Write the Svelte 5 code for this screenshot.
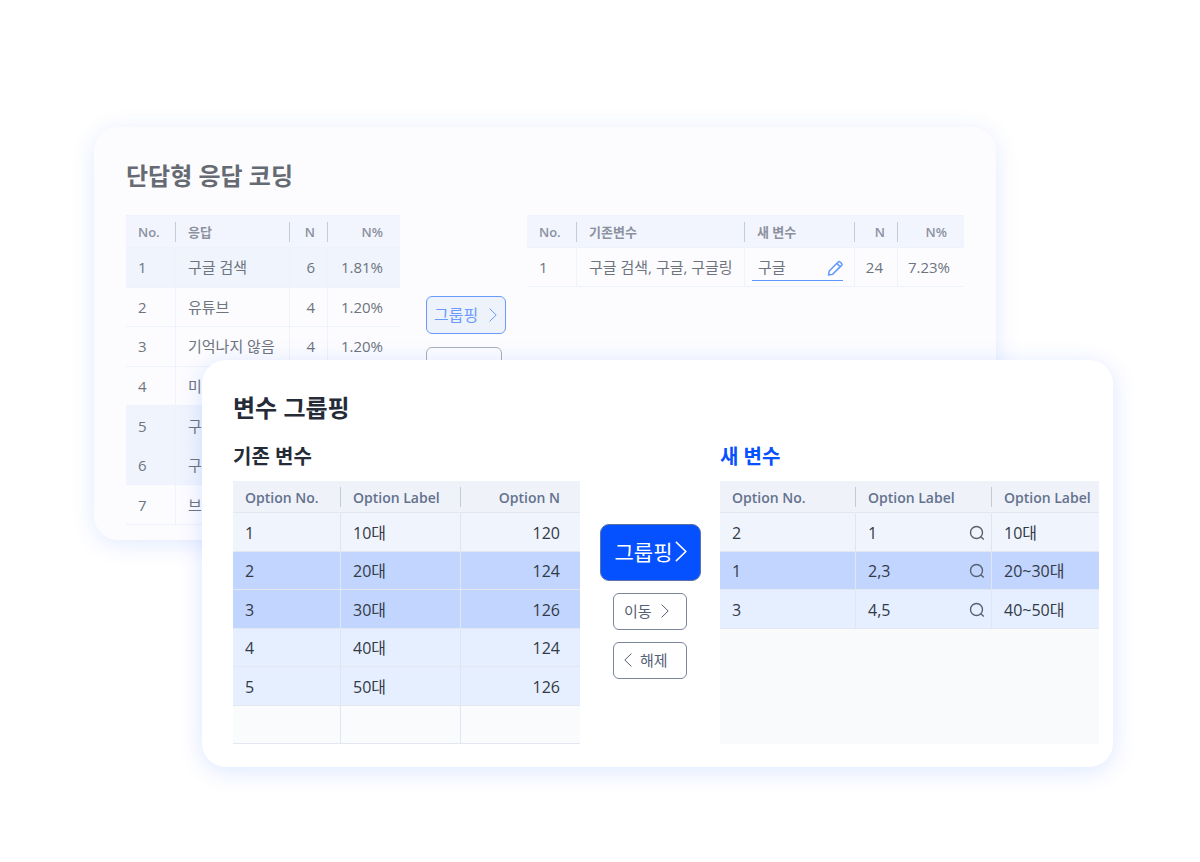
<script lang="ts">
    //Types
    type Answer = { no: number, label: string, n?: number, percent?: string, picked?: boolean };
    type OldOption = { no: number | string, label: string, n: number | string, tone: string };
    type NewOption = { no: number, members: string, label: string, tone: string };

    //Data
    const answers: Answer[] = [
        { no: 1, label: "구글 검색", n: 6, percent: "1.81%", picked: true },
        { no: 2, label: "유튜브", n: 4, percent: "1.20%" },
        { no: 3, label: "기억나지 않음", n: 4, percent: "1.20%" },
        { no: 4, label: "미" },
        { no: 5, label: "구", picked: true },
        { no: 6, label: "구", picked: true },
        { no: 7, label: "브" },
    ];
    const oldOptions: OldOption[] = [
        { no: 1, label: "10대", n: 120, tone: "pale" },
        { no: 2, label: "20대", n: 124, tone: "picked" },
        { no: 3, label: "30대", n: 126, tone: "picked" },
        { no: 4, label: "40대", n: 124, tone: "soft" },
        { no: 5, label: "50대", n: 126, tone: "soft" },
        { no: "", label: "", n: "", tone: "blank" },
    ];
    const newOptions: NewOption[] = [
        { no: 2, members: "1", label: "10대", tone: "pale" },
        { no: 1, members: "2,3", label: "20~30대", tone: "picked" },
        { no: 3, members: "4,5", label: "40~50대", tone: "soft" },
    ];

    let newName = $state("구글");
</script>

{#snippet chevron(left: boolean)}
    <svg class="chevron" viewBox="0 0 8 14" aria-hidden="true">
        <path d={left ? "M7.4.6.8 7l6.6 6.4" : "M.6.6 7.2 7 .6 13.4"} />
    </svg>
{/snippet}

<main>
    <section class="card coding">
        <h1>단답형 응답 코딩</h1>
        <div class="columns">
            <table class="answers">
                <colgroup><col class="a-no" /><col class="a-label" /><col class="a-n" /><col /></colgroup>
                <thead>
                    <tr><th>No.</th><th>응답</th><th class="num">N</th><th class="num wide">N%</th></tr>
                </thead>
                <tbody>
                    {#each answers as row (row.no)}
                        <tr class:picked={row.picked}>
                            <td>{row.no}</td>
                            <td>{row.label}</td>
                            <td class="num">{row.n ?? ""}</td>
                            <td class="num wide">{row.percent ?? ""}</td>
                        </tr>
                    {/each}
                </tbody>
            </table>

            <div class="actions">
                <button class="group">그룹핑 {@render chevron(false)}</button>
                <button class="move">이동 {@render chevron(false)}</button>
            </div>

            <table class="merged">
                <colgroup><col class="m-no" /><col class="m-old" /><col class="m-new" /><col class="m-n" /><col /></colgroup>
                <thead>
                    <tr><th>No.</th><th>기존변수</th><th>새 변수</th><th class="num">N</th><th class="num wide">N%</th></tr>
                </thead>
                <tbody>
                    <tr>
                        <td>1</td>
                        <td>구글 검색, 구글, 구글링</td>
                        <td class="edit">
                            <label>
                                <input type="text" aria-label="새 변수" bind:value={newName} />
                                <svg viewBox="0 0 16 16" aria-hidden="true">
                                    <path d="M1.6 14.8l.6-3.8 9-9a1.3 1.3 0 0 1 1.9 0l1.5 1.5a1.3 1.3 0 0 1 0 1.9l-9 9zM9.8 3.4l3.4 3.4" />
                                </svg>
                            </label>
                        </td>
                        <td class="num">24</td>
                        <td class="num wide">7.23%</td>
                    </tr>
                </tbody>
            </table>
        </div>
    </section>

    <section class="card grouping">
        <h1>변수 그룹핑</h1>
        <div class="columns">
            <div class="panel">
                <h2>기존 변수</h2>
                <table class="old">
                    <colgroup><col class="o-no" /><col class="o-label" /><col /></colgroup>
                    <thead>
                        <tr><th>Option No.</th><th>Option Label</th><th class="num">Option N</th></tr>
                    </thead>
                    <tbody>
                        {#each oldOptions as row (row.no)}
                            <tr class={row.tone}>
                                <td>{row.no}</td>
                                <td>{row.label}</td>
                                <td class="num">{row.n}</td>
                            </tr>
                        {/each}
                    </tbody>
                </table>
            </div>

            <div class="actions">
                <button class="group">그룹핑{@render chevron(false)}</button>
                <button>이동 {@render chevron(false)}</button>
                <button class="back">{@render chevron(true)} 해제</button>
            </div>

            <div class="panel fresh">
                <h2>새 변수</h2>
                <div class="well">
                    <table class="new">
                        <colgroup><col class="n-no" /><col class="n-label" /><col /></colgroup>
                        <thead>
                            <tr><th>Option No.</th><th>Option Label</th><th>Option Label</th></tr>
                        </thead>
                        <tbody>
                            {#each newOptions as row (row.no)}
                                <tr class={row.tone}>
                                    <td>{row.no}</td>
                                    <td>
                                        <div class="search">
                                            {row.members}
                                            <button aria-label="검색">
                                                <svg viewBox="0 0 16 16" aria-hidden="true">
                                                    <circle cx="7.5" cy="7.5" r="6" />
                                                    <path d="M11.8 11.8l3 2.7" />
                                                </svg>
                                            </button>
                                        </div>
                                    </td>
                                    <td>{row.label}</td>
                                </tr>
                            {/each}
                        </tbody>
                    </table>
                </div>
            </div>
        </div>
    </section>
</main>

<style>
    :global(body) {
        background: #fff;
    }

    main {
        padding: 127px 87px 95px 94px;
        font-family: "Open Sans", "Noto Sans CJK KR", sans-serif;
        font-size: 16px;
        line-height: 24px;
        color: #333a45;
    }

    .card {
        box-sizing: border-box;
        border-radius: 24px;
    }

    .coding {
        margin-right: 117px;
        padding: 31px 32px 15px;
        background: #fcfcff;
        box-shadow: 0 4px 24px rgba(0, 80, 255, 0.12);
        font-size: 15px;
        color: #6e747e;
    }

    /* lies over the lower part of the coding card */
    .grouping {
        position: relative;
        margin-top: -180px;
        margin-left: 108px;
        padding: 30px 14px 23px 31px;
        background: #fff;
        box-shadow: 0 4px 24px rgba(0, 80, 255, 0.14);
    }

    h1 {
        margin: 0;
        font-size: 24px;
        line-height: 36px;
        font-weight: 700;
        color: #252c37;
    }

    .coding h1 {
        margin-bottom: 21px;
        color: #666b73;
    }

    h2 {
        margin: 16px 0 9px;
        font-size: 20px;
        line-height: 30px;
        font-weight: 700;
        color: #252c37;
    }

    .fresh h2 {
        color: #0551ff;
    }

    .columns {
        display: grid;
    }

    .coding .columns {
        grid-template-columns: 274fr 127px 437fr;
        align-items: start;
    }

    .grouping .columns {
        grid-template-columns: 347fr 140px 379fr;
    }

    /* Tables */
    table {
        width: 100%;
        table-layout: fixed;
        border-collapse: separate;
        border-spacing: 0;
    }

    th,
    td {
        box-sizing: border-box;
        padding: 2px 0 0 12px;
        text-align: left;
        white-space: nowrap;
        border-bottom: 1px solid #e2e7f0;
    }

    td + td,
    th + th {
        border-left: 1px solid transparent;
    }

    td + td {
        border-left-color: #dfe6f1;
    }

    th {
        height: 32px;
        font-size: 14px;
        line-height: 20px;
        font-weight: 600;
        color: #64718e;
        background: #eff3f9;
    }

    /* short divider between the header cells */
    th + th {
        background: linear-gradient(#c3cbd9, #c3cbd9) left center / 1px 20px no-repeat border-box, #eff3f9;
    }

    .num {
        padding: 2px 20px 0 0;
        text-align: right;
    }

    .coding th {
        height: 33px;
        font-size: 13px;
        color: #8c919f;
        background-color: #f2f5fd;
        border-top: 1px solid #edf2fc;
    }

    .coding th,
    .coding td {
        padding-top: 0;
        border-bottom-color: #edf2fc;
    }

    .coding td + td {
        border-left-color: #edf2fc;
    }

    .coding .num {
        padding-right: 12px;
    }

    .coding .wide {
        padding-right: 17px;
    }

    .coding .merged td.num {
        padding-right: 14px;
    }

    .coding .picked td {
        background: #f0f4fd;
    }

    .answers {
        height: 310px;
    }

    .merged tbody td {
        height: 39px;
    }

    .a-no { width: 49px; }
    .a-label { width: 114px; }
    .a-n { width: 38px; }
    .m-no { width: 49px; }
    .m-old { width: 168px; }
    .m-new { width: 110px; }
    .m-n { width: 43px; }
    .o-no { width: 107px; }
    .o-label { width: 120px; }
    .n-no { width: 135px; }
    .n-label { width: 136px; }

    .coding .edit {
        padding: 2px 11px 0 7px;
    }

    .edit label {
        display: flex;
        align-items: center;
        border-bottom: 1px solid #5f95ff;
    }

    .edit input {
        flex: 1;
        min-width: 0;
        padding: 0 0 2px 6px;
        border: 0;
        outline: 0;
        background: none;
        font: inherit;
        line-height: 22px;
        color: inherit;
    }

    .edit svg {
        width: 16px;
        height: 16px;
        fill: none;
        stroke: #5f95ff;
        stroke-width: 1.5;
    }

    .old tbody td {
        height: 38px;
    }

    .old {
        height: 263px;
    }

    .new tbody {
        height: 116px;
    }

    .pale td { background: #f0f4fc; }
    .grouping .picked td { background: #c1d5ff; }
    .soft td { background: #e6efff; }
    .blank td { background: #f9fbfd; }

    .panel {
        display: flex;
        flex-direction: column;
    }

    .well {
        flex: 1;
        background: #f9fafc;
    }

    .search {
        display: flex;
        align-items: center;
        justify-content: space-between;
        padding-right: 6px;
    }

    .search button {
        display: flex;
        padding: 0;
        border: 0;
        background: none;
    }

    .search svg {
        width: 16px;
        height: 16px;
        fill: none;
        stroke: #56606f;
        stroke-width: 1.4;
    }

    /* Buttons */
    .actions {
        display: flex;
        flex-direction: column;
        align-items: center;
        gap: 12px;
        padding-top: 98px;
    }

    .actions button {
        box-sizing: border-box;
        display: flex;
        align-items: center;
        gap: 9px;
        width: 74px;
        height: 37px;
        padding: 0 10px 2px;
        border: 1px solid #7a859c;
        border-radius: 6px;
        background: #fff;
        font: inherit;
        font-size: 15px;
        color: #566074;
        white-space: nowrap;
    }

    .actions .back {
        gap: 8px;
    }

    .chevron {
        flex: none;
        width: 8px;
        height: 14px;
        fill: none;
        stroke: currentColor;
        stroke-width: 1;
    }

    .grouping .group {
        gap: 3px;
        width: 101px;
        height: 57px;
        padding: 0 14px 2px;
        border-color: #5b73ad;
        border-radius: 9px;
        background: #0551ff;
        font-size: 21px;
        color: #fff;
    }

    .grouping .group .chevron {
        width: 12px;
        height: 21px;
    }

    .coding .actions {
        align-items: flex-start;
        gap: 13px;
        padding-top: 81px;
        padding-left: 26px;
    }

    .coding .group {
        gap: 11px;
        width: 80px;
        height: 38px;
        padding: 0 7px;
        border-color: #6a9bfb;
        background: #edf2fb;
        font-size: 16px;
        color: #6a9bfb;
    }

    .coding .move {
        width: 76px;
        padding-top: 6px;
        border-color: #a8aebb;
        background: none;
    }
</style>
